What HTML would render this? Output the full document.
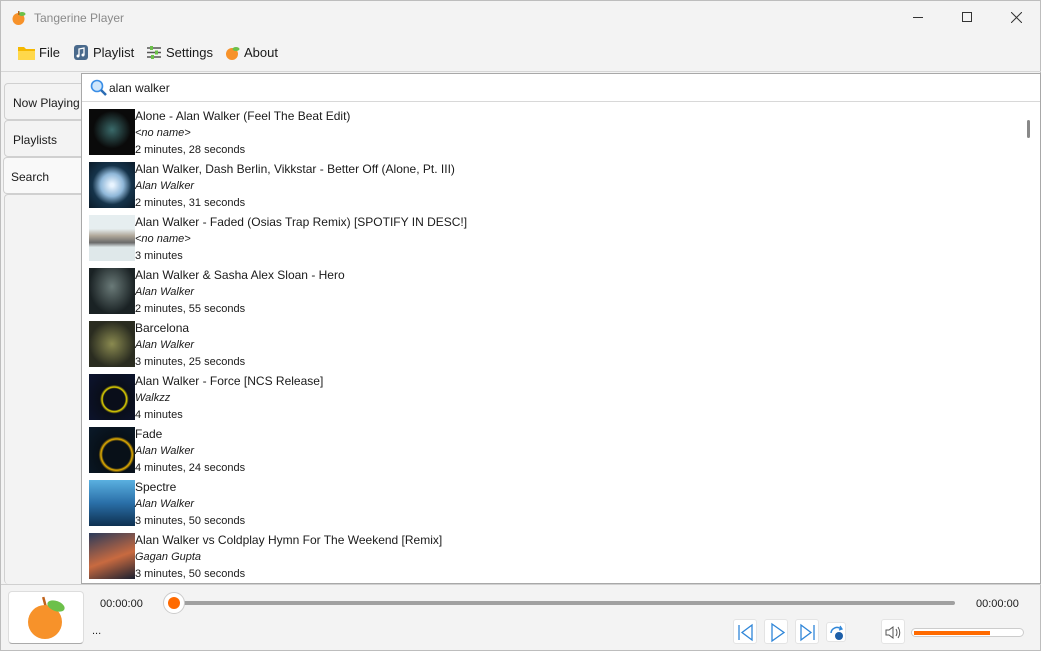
<!DOCTYPE html>
<html><head><style>
*{box-sizing:border-box;margin:0;padding:0}
body{width:1041px;height:651px;background:#f3f3f3;font-family:"Segoe UI","Liberation Sans",sans-serif;font-size:12px;color:#1a1a1a;position:relative;overflow:hidden;border:1px solid #bdbdbd}
.abs{position:absolute}
.menu span{position:absolute;top:44px;font-size:13px}
.tab{position:absolute;left:3px;width:78px;height:37px;border:1px solid #d0d0d0;border-radius:4px 0 0 4px;background:#f3f3f3;padding:12px 0 0 8px;font-size:12px}
.row{position:absolute;left:88px;width:920px;height:53px}
.th{position:absolute;left:0;top:0;width:46px;height:46px}
.t,.a,.d{position:absolute;left:46px;white-space:nowrap;line-height:15px}
.t{top:0;font-size:12px}
.a{top:17px;font-style:italic;font-size:11px}
.d{top:34px;font-size:11px}
.btn{position:absolute;top:618px;width:24px;height:25px;background:#fff;border-radius:3px;border:1px solid #e4e4e4}
</style></head><body>
<svg class="abs" style="left:10px;top:9px" width="16" height="16" viewBox="0 0 16 16"><circle cx="7.5" cy="9" r="6" fill="#f7922a"/><ellipse cx="11" cy="4" rx="3.5" ry="2" fill="#6cc04a"/><rect x="7" y="1" width="1.5" height="4" fill="#b5651d"/></svg>
<div class="abs" style="left:33px;top:10px;font-size:12px;color:#8a8a8a">Tangerine Player</div>
<div class="abs" style="left:912px;top:16px;width:10px;height:1px;background:#333"></div>
<div class="abs" style="left:961px;top:11px;width:10px;height:10px;border:1px solid #333"></div>
<svg class="abs" style="left:1010px;top:11px" width="11" height="11"><path d="M0 0l11 11M11 0L0 11" stroke="#333" stroke-width="1"/></svg>
<div class="menu">
<svg class="abs" style="left:17px;top:45px" width="17" height="14"><path d="M0 1h6l2 2h9v11H0z" fill="#f5b800"/><rect y="5" width="17" height="9" fill="#ffd84a"/></svg><span style="left:38px">File</span>
<svg class="abs" style="left:73px;top:44px" width="14" height="15"><rect width="14" height="15" rx="3" fill="#4a6a8c"/><path d="M5 11V4l5-1v7" stroke="#fff" fill="none" stroke-width="1.3"/><circle cx="4" cy="11" r="1.5" fill="#fff"/><circle cx="9" cy="10" r="1.5" fill="#fff"/></svg><span style="left:92px">Playlist</span>
<svg class="abs" style="left:146px;top:45px" width="14" height="13"><g stroke="#555" stroke-width="1.5"><path d="M0 2h14M0 6.5h14M0 11h14"/></g><g fill="#6cc04a"><rect x="3" y="0" width="3" height="4"/><rect x="8" y="4.5" width="3" height="4"/><rect x="4" y="9" width="3" height="4"/></g></svg><span style="left:165px">Settings</span>
<svg class="abs" style="left:224px;top:44px" width="16" height="16"><circle cx="7" cy="9" r="6" fill="#f7922a"/><ellipse cx="11" cy="4" rx="3.5" ry="2" fill="#6cc04a"/></svg><span style="left:243px">About</span>
</div>
<div class="abs" style="left:0;top:70px;width:1041px;height:1px;background:#d6d6d6"></div>
<div class="tab" style="top:82px">Now Playing</div>
<div class="tab" style="top:119px">Playlists</div>
<div class="tab" style="top:156px;background:#f9f9f9;border-right:none;left:2px;padding-left:7px">Search</div>
<div class="tab" style="top:193px;height:390px;border-bottom:none"></div>
<div class="abs" style="left:80px;top:72px;width:960px;height:511px;background:#fff;border:1px solid #a8a8a8"></div>
<div class="abs" style="left:81px;top:73px;width:958px;height:28px;border-bottom:1px solid #d8d8d8;background:#fff"></div>
<svg class="abs" style="left:89px;top:78px" width="18" height="18"><circle cx="7" cy="7" r="5.5" fill="#cfe6fb" stroke="#3a8ee6" stroke-width="1.6"/><path d="M11 11l5 5" stroke="#2a6cb4" stroke-width="2.5"/></svg>
<div class="abs" style="left:108px;top:80px;font-size:12px">alan walker</div>
<div class="abs" style="left:1026px;top:119px;width:3px;height:18px;background:#888;border-radius:2px"></div>

<div class="row" style="top:108px"><div class="th" style="background:radial-gradient(circle at 50% 45%,#3a6a6a,#0a0a0a 55%)"></div><div class="t">Alone - Alan Walker (Feel The Beat Edit)</div><div class="a">&lt;no name&gt;</div><div class="d">2 minutes, 28 seconds</div></div>
<div class="row" style="top:161px"><div class="th" style="background:radial-gradient(circle,#e8f4ff 5%,#8fb7d8 35%,#15334a 60%,#0a1a28)"></div><div class="t">Alan Walker, Dash Berlin, Vikkstar - Better Off (Alone, Pt. III)</div><div class="a">Alan Walker</div><div class="d">2 minutes, 31 seconds</div></div>
<div class="row" style="top:214px"><div class="th" style="background:linear-gradient(#e6eef0 30%,#b0a89a 45%,#6a6a6a 60%,#dfe8ea 70%)"></div><div class="t">Alan Walker - Faded (Osias Trap Remix) [SPOTIFY IN DESC!]</div><div class="a">&lt;no name&gt;</div><div class="d">3 minutes</div></div>
<div class="row" style="top:267px"><div class="th" style="background:radial-gradient(ellipse at 50% 40%,#6a7a78,#1a2224 70%)"></div><div class="t">Alan Walker &amp; Sasha Alex Sloan - Hero</div><div class="a">Alan Walker</div><div class="d">2 minutes, 55 seconds</div></div>
<div class="row" style="top:320px"><div class="th" style="background:radial-gradient(circle,#8a8a50,#2a2c20 70%)"></div><div class="t">Barcelona</div><div class="a">Alan Walker</div><div class="d">3 minutes, 25 seconds</div></div>
<div class="row" style="top:373px"><div class="th" style="background:radial-gradient(circle at 55% 55%,#0a0e1a 30%,#e8d800 34%,#0a0e1a 40%,#0c1430)"></div><div class="t">Alan Walker - Force [NCS Release]</div><div class="a">Walkzz</div><div class="d">4 minutes</div></div>
<div class="row" style="top:426px"><div class="th" style="background:radial-gradient(circle at 60% 60%,#081018 35%,#e8b000 40%,#081018 46%,#0a1a2a)"></div><div class="t">Fade</div><div class="a">Alan Walker</div><div class="d">4 minutes, 24 seconds</div></div>
<div class="row" style="top:479px"><div class="th" style="background:linear-gradient(#5ab0e0,#2a6fa8 50%,#0e3050)"></div><div class="t">Spectre</div><div class="a">Alan Walker</div><div class="d">3 minutes, 50 seconds</div></div>
<div class="row" style="top:532px;height:49px;overflow:hidden"><div class="th" style="background:linear-gradient(160deg,#2a3a5a,#c86a40 55%,#1a2030)"></div><div class="t">Alan Walker vs Coldplay Hymn For The Weekend [Remix]</div><div class="a">Gagan Gupta</div><div class="d">3 minutes, 50 seconds</div></div>

<div class="abs" style="left:0;top:583px;width:1041px;height:1px;background:#d0d0d0"></div>
<div class="abs" style="left:7px;top:590px;width:76px;height:53px;background:#fff;border-radius:4px;border:1px solid #ddd;border-bottom-color:#aaa"></div>
<svg class="abs" style="left:24px;top:594px" width="44" height="46" viewBox="0 0 44 46"><rect x="18" y="2" width="2.5" height="9" fill="#c0621a" transform="rotate(-15 19 6)"/><circle cx="20" cy="27" r="17" fill="#f7922a"/><ellipse cx="31" cy="11" rx="9" ry="5" fill="#6cc04a" transform="rotate(20 31 11)"/></svg>
<div class="abs" style="left:99px;top:597px;font-size:11px;color:#1a1a1a">00:00:00</div>
<div class="abs" style="left:91px;top:624px;font-size:11px">...</div>
<div class="abs" style="left:170px;top:600px;width:784px;height:4px;background:#a0a0a0;border-radius:2px"></div>
<div class="abs" style="left:162px;top:591px;width:22px;height:22px;border-radius:50%;background:#fff;border:1px solid #ccc"></div>
<div class="abs" style="left:167px;top:596px;width:12px;height:12px;border-radius:50%;background:#ff6a00"></div>
<div class="abs" style="left:975px;top:597px;font-size:11px">00:00:00</div>
<div class="btn" style="left:732px"><svg width="24" height="25"><path d="M5 5v15M18 5L8 12.5 18 20z" stroke="#2f86d8" fill="none" stroke-width="1.3"/></svg></div>
<div class="btn" style="left:763px"><svg width="24" height="25"><path d="M7 4l12 8.5L7 21z" stroke="#2f86d8" fill="none" stroke-width="1.3"/></svg></div>
<div class="btn" style="left:794px"><svg width="24" height="25"><path d="M18 5v15M5 5l10 7.5L5 20z" stroke="#2f86d8" fill="none" stroke-width="1.3"/></svg></div>
<div class="btn" style="left:825px;width:20px;height:20px;top:621px"><svg width="20" height="20"><path d="M4 10a6 6 0 0 1 10-4" stroke="#2f86d8" fill="none" stroke-width="1.5"/><path d="M13 3l2 3-3 1" stroke="#2f86d8" fill="none" stroke-width="1.3"/><circle cx="12" cy="13" r="4" fill="#1e5fa8"/></svg></div>
<div class="btn" style="left:880px;top:618px;width:24px;height:25px"><svg width="24" height="25"><path d="M4 10h3l4-3v11l-4-3H4z" stroke="#555" fill="none"/><path d="M14 9q2 3.5 0 7M16 7q3.5 5.5 0 11" stroke="#555" fill="none"/></svg></div>
<div class="abs" style="left:910px;top:627px;width:113px;height:9px;background:#fff;border:1px solid #ccc;border-radius:5px"></div>
<div class="abs" style="left:913px;top:630px;width:76px;height:4px;background:#ff6a00"></div>
</body></html>
